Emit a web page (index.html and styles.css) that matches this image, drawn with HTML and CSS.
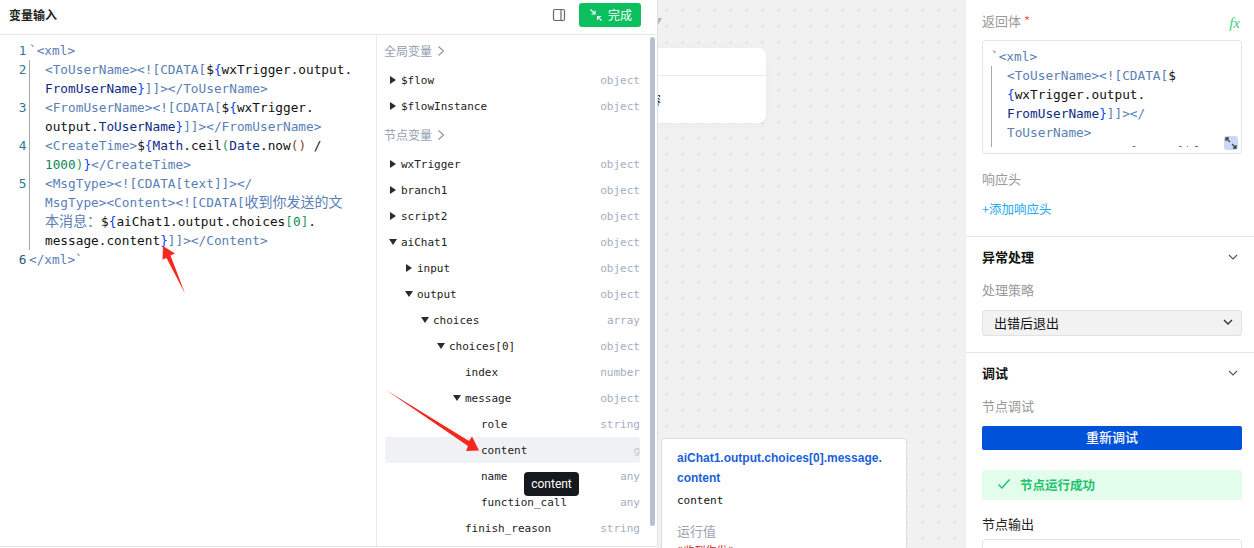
FILE: index.html
```html
<!DOCTYPE html>
<html lang="zh">
<head>
<meta charset="utf-8">
<title>变量输入</title>
<link rel="stylesheet" href="styles.css">
</head>
<body>
<div class="page">
  <section class="var-panel">
    <header class="var-head">
      <h1 class="var-title">变量输入</h1>
      <svg class="panel-icon" width="14" height="14" viewBox="0 0 14 14"><rect x="1.5" y="1.5" width="11" height="11" rx="1.5" fill="none" stroke="#666" stroke-width="1.2"/><path d="M9 1.5v11" stroke="#666" stroke-width="1.2"/></svg>
      <button class="done-btn">
        <svg width="12" height="12" viewBox="0 0 12 12"><path d="M0.5 0.5L5 5M5 1.5V5H1.5M11.5 11.5L7.5 7.5M7.5 11V7.5H11" fill="none" stroke="#fff" stroke-width="1.1"/></svg>
        <span>完成</span>
      </button>
    </header>
    <div class="var-body">
      <div class="code-pane mono">
        <div class="cl"><span class="num">1</span><span class="txt"><i class="t">`&lt;xml&gt;</i></span></div>
        <div class="cl"><span class="num">2</span><span class="txt in"><i class="t">&lt;ToUserName&gt;&lt;![CDATA[</i>$<i class="b">{</i>wxTrigger.output.<br><i class="n">FromUserName</i><i class="b">}</i><i class="t">]]&gt;&lt;/ToUserName&gt;</i></span></div>
        <div class="cl"><span class="num">3</span><span class="txt in"><i class="t">&lt;FromUserName&gt;&lt;![CDATA[</i>$<i class="b">{</i>wxTrigger.<br>output.<i class="n">ToUserName</i><i class="b">}</i><i class="t">]]&gt;&lt;/FromUserName&gt;</i></span></div>
        <div class="cl"><span class="num">4</span><span class="txt in"><i class="t">&lt;CreateTime&gt;</i>$<i class="b">{</i><i class="n">Math</i>.ceil<i class="g">(</i><i class="n">Date</i>.now<i class="br">()</i> /<br><i class="d">1000</i><i class="g">)</i><i class="b">}</i><i class="t">&lt;/CreateTime&gt;</i></span></div>
        <div class="cl"><span class="num">5</span><span class="txt in"><i class="t">&lt;MsgType&gt;&lt;![CDATA[text]]&gt;&lt;/</i><br><i class="t">MsgType&gt;&lt;Content&gt;&lt;![CDATA[<span class="cjk">收到你发送的文</span></i><br><i class="t"><span class="cjk">本消息：</span></i>$<i class="b">{</i>aiChat1.output.choices<i class="g">[</i><i class="d">0</i><i class="g">]</i>.<br>message.content<i class="b">}</i><i class="t">]]&gt;&lt;/Content&gt;</i></span></div>
        <div class="cl"><span class="num dark">6</span><span class="txt"><i class="t">&lt;/xml&gt;`</i></span></div>
      </div>
      <div class="tree-pane">
        <div class="tree mono-s">
          <div class="group">全局变量<svg width="8" height="12" viewBox="0 0 8 12"><path d="M1.5 1.5L6.5 6L1.5 10.5" fill="none" stroke="#8a94a6" stroke-width="1.1"/></svg></div>
          <div class="row l0"><b class="ar right"></b><span>$flow</span><em>object</em></div>
          <div class="row l0"><b class="ar right"></b><span>$flowInstance</span><em>object</em></div>
          <div class="group">节点变量<svg width="8" height="12" viewBox="0 0 8 12"><path d="M1.5 1.5L6.5 6L1.5 10.5" fill="none" stroke="#8a94a6" stroke-width="1.1"/></svg></div>
          <div class="row l0"><b class="ar right"></b><span>wxTrigger</span><em>object</em></div>
          <div class="row l0"><b class="ar right"></b><span>branch1</span><em>object</em></div>
          <div class="row l0"><b class="ar right"></b><span>script2</span><em>object</em></div>
          <div class="row l0"><b class="ar down"></b><span>aiChat1</span><em>object</em></div>
          <div class="row l1"><b class="ar right"></b><span>input</span><em>object</em></div>
          <div class="row l1"><b class="ar down"></b><span>output</span><em>object</em></div>
          <div class="row l2"><b class="ar down"></b><span>choices</span><em>array</em></div>
          <div class="row l3"><b class="ar down"></b><span>choices[0]</span><em>object</em></div>
          <div class="row l4"><b class="ar"></b><span>index</span><em>number</em></div>
          <div class="row l4"><b class="ar down"></b><span>message</span><em>object</em></div>
          <div class="row l5"><b class="ar"></b><span>role</span><em>string</em></div>
          <div class="row l5 active"><b class="ar"></b><span>content</span><em class="faint">g</em></div>
          <div class="row l5"><b class="ar"></b><span>name</span><em>any</em></div>
          <div class="row l5"><b class="ar"></b><span>function_call</span><em>any</em></div>
          <div class="row l4"><b class="ar"></b><span>finish_reason</span><em>string</em></div>
        </div>
        <div class="scrollbar"></div>
      </div>
    </div>
    <div class="tooltip">content</div>
  </section>

  <main class="canvas">
    <div class="flow-arrow"></div>
    <div class="flow-card">
      <div class="flow-card-head"></div>
      <div class="flow-card-body">输出内容</div>
    </div>
    <div class="popover">
      <div class="pop-title">aiChat1.output.choices[0].message.<br>content</div>
      <div class="pop-name mono-s">content</div>
      <div class="pop-label">运行值</div>
      <div class="pop-value mono-s">"收到你发"</div>
    </div>
  </main>

  <aside class="side">
    <section class="sec">
      <div class="label-row"><span class="label">返回体 <i class="req">*</i></span><span class="fx">fx</span></div>
      <div class="editor mono">
        <div class="editor-clip">
          <div class="t">`&lt;xml&gt;</div>
          <div class="txt in"><i class="t">&lt;ToUserName&gt;&lt;![CDATA[</i>$<br><i class="b">{</i>wxTrigger.output.<br><i class="n">FromUserName</i><i class="b">}</i><i class="t">]]&gt;&lt;/</i><br><i class="t">ToUserName&gt;</i><br><i class="t">&lt;FromUserName&gt;&lt;![CDATA[</i>$<i class="b">{</i></div>
        </div>
        <span class="expand"><svg width="14" height="14" viewBox="0 0 14 14"><path d="M2 2L6 6M2 5V2H5M12 12L8 8M12 9V12H9" fill="none" stroke="#444" stroke-width="1.3"/></svg></span>
      </div>
      <div class="label gap15">响应头</div>
      <div class="link">+添加响应头</div>
    </section>
    <section class="sec">
      <div class="sec-title"><span>异常处理</span><svg width="10" height="6" viewBox="0 0 10 6"><path d="M1 1L5 5L9 1" fill="none" stroke="#555" stroke-width="1.1"/></svg></div>
      <div class="label gap13">处理策略</div>
      <div class="select"><span>出错后退出</span><svg width="10" height="6" viewBox="0 0 10 6"><path d="M1 1L5 5L9 1" fill="none" stroke="#333" stroke-width="1.4"/></svg></div>
    </section>
    <section class="sec last">
      <div class="sec-title"><span>调试</span><svg width="10" height="6" viewBox="0 0 10 6"><path d="M1 1L5 5L9 1" fill="none" stroke="#555" stroke-width="1.1"/></svg></div>
      <div class="label gap13">节点调试</div>
      <button class="debug-btn">重新调试</button>
      <div class="alert"><svg width="14" height="12" viewBox="0 0 14 12"><path d="M1.5 6.5L5 10L12.5 1.5" fill="none" stroke="#1fc26c" stroke-width="1.4"/></svg><span>节点运行成功</span></div>
      <div class="label dark-label">节点输出</div>
      <div class="output-box"><svg width="14" height="8" viewBox="0 0 14 8"><path d="M1 7V1H5M9 1H13V7" fill="none" stroke="#444" stroke-width="1.2"/></svg></div>
    </section>
  </aside>

  <svg class="annot" width="1254" height="548" viewBox="0 0 1254 548">
    <path d="M163 246L175 253.500L170.500 255.500L185 293.500L166.500 258L162.500 259.500Z" fill="#f5281e"/>
    <path d="M386 390L469 441L472 436.500L479 450.500L466 451L468 446Z" fill="#f5281e"/>
  </svg>
</div>
</body>
</html>
```
FILE: styles.css
```css
* { box-sizing: border-box; }
html, body { margin: 0; height: 100%; overflow: hidden; background: #fff; }
body { font-family: "Liberation Sans", "Noto Sans CJK SC", sans-serif; color: #111; }
i, em { font-style: normal; }
.page { position: relative; display: flex; width: 1254px; height: 548px; overflow: hidden; }
.mono { font-family: "DejaVu Sans Mono", "Noto Sans CJK SC", monospace; font-size: 12.75px; line-height: 19px; }
.mono-s { font-family: "DejaVu Sans Mono", "Noto Sans CJK SC", monospace; font-size: 11px; }

/* variable panel */
.var-panel { position: relative; z-index: 2; flex: 0 0 658px; min-width: 0; height: 547px; background: #fff; border-right: 1px solid #dfe1e6; border-bottom: 1px solid #e2e4ea; display: flex; flex-direction: column; }
.var-head { height: 35px; flex: none; display: flex; align-items: center; padding: 0 16px 5px 9px; border-bottom: 1px solid #e4e6ef; }
.var-title { margin: 0; font-size: 12px; font-weight: 700; color: #222; flex: 1; font-family: "Noto Sans CJK SC", sans-serif; line-height: 20px; }
.panel-icon { margin-right: 13px; }
.done-btn { width: 62px; height: 24px; border: 0; border-radius: 3px; background: #0cbf5f; color: #fff; display: flex; align-items: center; padding: 0 0 0 11px; gap: 6px; font: 12px "Noto Sans CJK SC", sans-serif; }
.var-body { flex: 1; display: flex; min-height: 0; }
.code-pane { flex: 0 0 377px; padding-top: 6px; border-right: 1px solid #e6e8ef; overflow: hidden; color: #111; }
.cl { display: flex; }
.num { flex: 0 0 26.5px; text-align: right; color: #2b7a95; }
.num.dark { color: #2a5a85; }
.txt { display: block; white-space: nowrap; padding-left: 2.5px; }
.txt.in { padding-left: 15px; margin-left: 2.500px; border-left: 1px solid #a8a8a8; }
.t { color: #5a80b6; }
.n { color: #0e2a82; }
.b { color: #0b3ff5; }
.g { color: #2f9a55; }
.d { color: #098658; }
.br { color: #7f4a25; }
.cjk { font-family: "Noto Sans CJK SC", sans-serif; font-size: 14px; line-height: 0; }

.tree-pane { flex: 1; display: flex; padding: 0 2px 0 8px; gap: 10px; min-width: 0; }
.tree { flex: 0 0 255px; color: #222; }
.group { height: 32px; display: flex; align-items: center; gap: 5px; margin-left: -1px; padding-bottom: 1px; font: 12px "Noto Sans CJK SC", sans-serif; color: #94a0b4; }
.row { position: relative; height: 26px; display: flex; align-items: center; border-radius: 3px; }
.row em { margin-left: auto; color: #a3adc2; }
.row em.faint { color: #c4c8d0; }
.row.active { background: #f0f1f5; }
.l1 { padding-left: 16px; }
.l2 { padding-left: 32px; }
.l3 { padding-left: 48px; }
.l4 { padding-left: 64px; }
.l5 { padding-left: 80px; }
.ar { flex: 0 0 16px; height: 8px; position: relative; display: block; }
.ar.right::before { content: ""; position: absolute; left: 5px; top: 0; border-style: solid; border-width: 4px 0 4px 6px; border-color: transparent transparent transparent #2b2b2b; }
.ar.down::before { content: ""; position: absolute; left: 4px; top: 1px; border-style: solid; border-width: 6px 4px 0 4px; border-color: #2b2b2b transparent transparent transparent; }
.scrollbar { flex: 0 0 5px; margin-top: 2px; height: 489px; background: #b8c0d0; border-radius: 3px; }
.tooltip { position: absolute; left: 524px; top: 472px; width: 55px; height: 24px; background: #15181d; color: #fff; border-radius: 4px; font-size: 12px; line-height: 24px; text-align: center; font-family: Roboto, "Liberation Sans", sans-serif; }

/* canvas */
.canvas { position: relative; flex: 0 0 308px; height: 548px; overflow: hidden; background-color: #f1f1f1; background-image: radial-gradient(circle, #d9d9d9 0.7px, transparent 1px); background-size: 16px 16px; background-position: 0.5px 2.5px; }
.flow-arrow { position: absolute; left: -4px; top: 18px; border-style: solid; border-width: 7px 4px 0 4px; border-color: #b5b5b5 transparent transparent transparent; }
.flow-card { position: absolute; left: -58px; top: 48px; width: 166px; height: 75px; background: #fff; border-radius: 8px; box-shadow: 0 2px 12px rgba(0,0,0,.03); }
.flow-card-head { height: 28px; border-bottom: 1px solid #e8e8ec; }
.flow-card-body { padding: 15px 0 0 13px; font: 12px/18px "Noto Sans CJK SC", sans-serif; color: #111; }
.popover { position: absolute; left: 3px; top: 438px; width: 246px; height: 130px; background: #fff; border: 1px solid #dcdde2; border-radius: 3px; padding: 9px 15px 0 15px; }
.pop-title { font-size: 12px; font-weight: 700; line-height: 20px; color: #1a5fd9; white-space: nowrap; }
.pop-name { margin-top: 2px; line-height: 22px; color: #111; }
.pop-label { margin-top: 8px; font: 13px/22px "Noto Sans CJK SC", sans-serif; color: #9aa3b2; }
.pop-value { line-height: 16px; color: #c92a2a; margin-top: 2px; }

/* right side */
.side { flex: 0 0 288px; height: 548px; background: #fff; overflow: hidden; }
.sec { padding: 10px 12px 16px 16px; border-bottom: 1px solid #e5e6ec; }
.sec:first-child { padding-top: 11px; padding-bottom: 17px; }
.sec.last { border-bottom: 0; padding-bottom: 0; }
.label-row { display: flex; justify-content: space-between; margin-bottom: 9px; height: 20px; }
.label { display: block; font: 13px/20px "Noto Sans CJK SC", sans-serif; color: #999; }
.req { color: #f55; }
.fx { font: italic 15px/24px "Liberation Serif", serif; color: #3ed07f; padding-right: 2px; }
.gap15 { margin-top: 15px; }
.gap13 { margin-top: 13px; }
.editor { position: relative; height: 114px; border: 1px solid #e4e4e6; border-radius: 4px; padding: 6px 0 0 8px; color: #111; }
.editor-clip { height: 100px; overflow: hidden; }
.editor .txt.in { margin-left: 0; padding-left: 15px; }
.expand { position: absolute; right: 3px; bottom: 3px; width: 14px; height: 14px; background: #c8d9f6; border-radius: 3px; display: flex; }
.link { margin-top: 10px; font: 12.500px/20px "Noto Sans CJK SC", sans-serif; color: #20a8f0; }
.sec-title { display: flex; justify-content: space-between; align-items: center; height: 20px; padding-right: 4px; font: 700 13px/20px "Noto Sans CJK SC", sans-serif; color: #111; }
.select { margin-top: 10px; height: 26px; background: #f2f2f2; border: 1px solid #e2e2e2; border-radius: 3px; padding: 0 8px 2px 11px; display: flex; justify-content: space-between; align-items: center; font: 13px "Noto Sans CJK SC", sans-serif; color: #111; }
.debug-btn { display: block; width: 100%; margin-top: 10px; height: 24px; border: 0; border-radius: 2px; background: #0052d9; color: #fff; font: 500 13px/20px "Noto Sans CJK SC", sans-serif; padding: 0 0 3px; }
.alert { margin-top: 20px; height: 30px; background: #e3fdec; border-radius: 3px; display: flex; align-items: center; padding: 0 0 2px 15px; gap: 9px; font: 700 12.500px "Noto Sans CJK SC", sans-serif; color: #1fc26c; }
.dark-label { margin-top: 14px; color: #222; }
.output-box { margin-top: 5px; height: 40px; border: 1px solid #e2e2e2; border-radius: 3px; padding: 5px 4px 0 0; text-align: right; }

.annot { position: absolute; left: 0; top: 0; z-index: 3; pointer-events: none; }
```
